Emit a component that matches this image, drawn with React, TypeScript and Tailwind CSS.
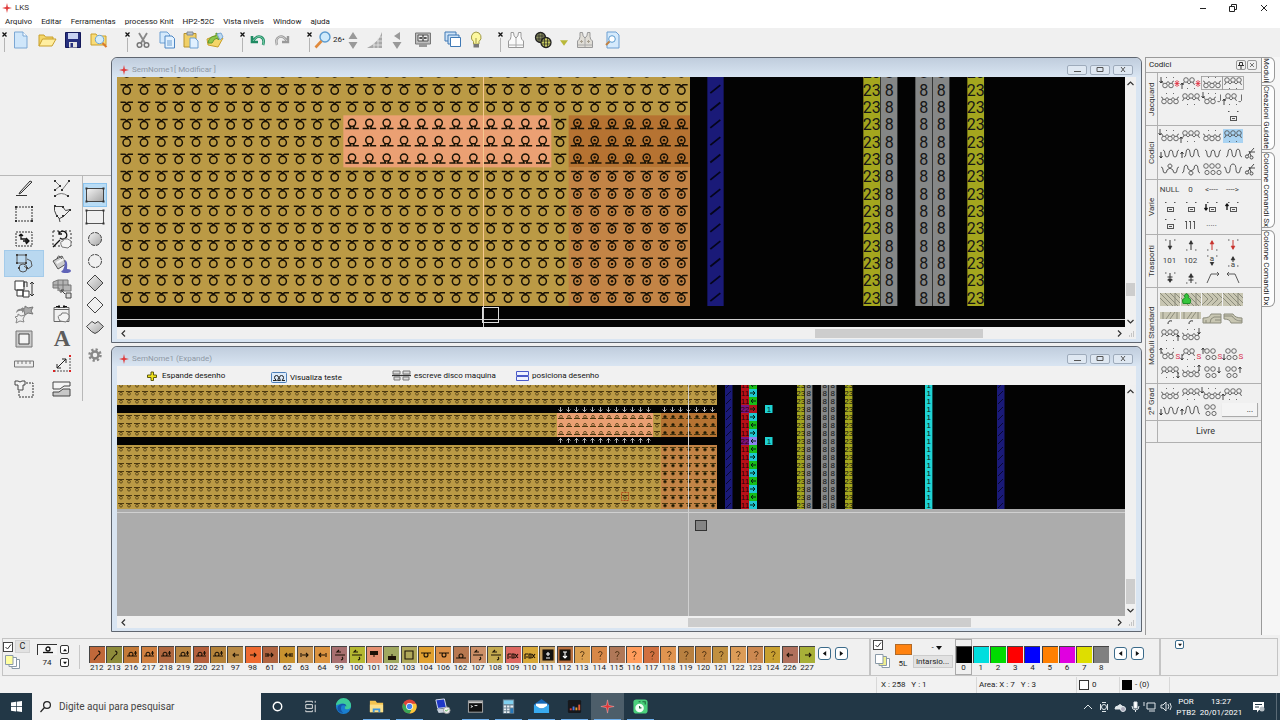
import React from 'react';

const INK = '#4a4a4a';

/* ---------- shared bits ---------- */

const Star: React.FC<{ size?: number }> = ({ size = 10 }) => (
  <svg width={size} height={size} viewBox="0 0 10 10" className="shrink-0">
    <path d="M5 0 5.9 4.1 10 5 5.9 5.9 5 10 4.1 5.900 0 5 4.100 4.100z" fill="#e03a3a" />
  </svg>
);

const Tri: React.FC<{ dir: 'up' | 'down' | 'left' | 'right'; size?: number; fill?: string }> = ({ dir, size = 6, fill = '#111' }) => {
  const d = { up: 'M0 5 3 1 6 5z', down: 'M0 1 3 5 6 1z', left: 'M5 0 1 3 5 6z', right: 'M1 0 5 3 1 6z' }[dir];
  return (
    <svg width={size} height={size} viewBox="0 0 6 6" className="shrink-0">
      <path d={d} fill={fill} />
    </svg>
  );
};

const Chevron: React.FC<{ d: string }> = ({ d }) => (
  <svg width="7" height="7" viewBox="0 0 7 7">
    <path d={d} fill="none" stroke="#333" strokeWidth="1.2" />
  </svg>
);

const Check: React.FC<{ label: string }> = ({ label }) => (
  <label className="relative flex size-[10px] shrink-0">
    <input type="checkbox" defaultChecked aria-label={label} className="peer size-[10px] appearance-none border border-[#444] bg-white" />
    <svg width="10" height="10" viewBox="0 0 10 10" className="pointer-events-none absolute inset-0 hidden peer-checked:block">
      <path d="M2.500 5l2 2 3.500-4.500" fill="none" stroke="#333" />
    </svg>
  </label>
);

/* ---------- top toolbar ---------- */

const Grip = () => (
  <div className="flex w-[7px] shrink-0 flex-col items-center pt-1">
    <svg width="5" height="5" viewBox="0 0 5 5">
      <path d="M.5.5l4 4M4.5.5l-4 4" stroke="#111" strokeWidth="1.3" />
    </svg>
    <div className="mt-px h-3.5 w-px bg-[#b4b4b4]" />
  </div>
);

const Tool: React.FC<{ label: string; w?: string; children: React.ReactNode }> = ({ label, w = 'w-6', children }) => (
  <button aria-label={label} className={`${w} flex h-6 shrink-0 items-center justify-center`}>
    <svg width="18" height="18" viewBox="0 0 18 18" fill="none" strokeWidth="1" className="shrink-0 overflow-visible">
      {children}
    </svg>
  </button>
);

const Vest: React.FC<{ dots?: boolean }> = ({ dots }) => (
  <>
    <path d="M4 1.500h2.500q0 4 2.500 5.500 2.500-1.500 2.500-5.500H14v4q0 3 2.500 4.500v6.500h-15V10Q4 8.500 4 5.500z" fill={dots ? '#e0ddd6' : '#fbfbfb'} stroke="#999" />
    <path d="M9 7v9M2 14h14" stroke="#aaa" />
    {dots && <path d="M5.500 9v3M4 10.500h3M12.500 9v3M11 10.500h3" stroke="#a8a090" />}
  </>
);

const Toolbar = () => (
  <div className="flex h-7 shrink-0 items-start gap-3 overflow-hidden bg-[#f0f0f0] pl-px">
    <div className="flex">
      <Grip />
      <Tool label="Novo" w="w-[26px]">
        <path d="M2.500 1h8.500l4 4v12H2.500z" fill="#cfe6fa" stroke="#7ba7d4" />
        <path d="M11 1v4h4" fill="#fff" stroke="#7ba7d4" />
      </Tool>
      <Tool label="Abrir" w="w-[26px]">
        <path d="M1 15V4h5l1.500 2H15v3" fill="#f5d76a" stroke="#c9a02c" />
        <path d="M1 15l3.500-7H18l-4 7z" fill="#ffeea0" stroke="#c9a02c" />
      </Tool>
      <Tool label="Salvar" w="w-[26px]">
        <path d="M1.500 1.500h15v15h-15z" fill="#27307e" stroke="#14195a" />
        <path d="M4 2h10v6H4z" fill="#c9d3f2" />
        <path d="M5 11h8v5.500H5z" fill="#e4e4e4" />
        <path d="M6.500 12h2.500v4H6.500z" fill="#27307e" />
      </Tool>
      <Tool label="Procurar" w="w-[26px]">
        <path d="M1 14V3h5l1.500 2H16v9z" fill="#f9dc78" stroke="#c9a02c" />
        <circle cx="9.500" cy="8.500" r="4.200" fill="#d3ecfb" stroke="#6fa6d6" />
        <path d="M12.500 12l4 4" stroke="#d97b2d" strokeWidth="2.200" />
      </Tool>
    </div>
    <div className="flex">
      <Grip />
      <Tool label="Recortar">
        <path d="M5 2l6 10M13 2L7 12" stroke="#888" strokeWidth="1.800" />
        <circle cx="5.500" cy="14" r="2.300" stroke="#777" strokeWidth="1.500" />
        <circle cx="12.500" cy="14" r="2.300" stroke="#777" strokeWidth="1.500" />
      </Tool>
      <Tool label="Copiar">
        <path d="M2 1h7l2.500 2.500V12H2z" fill="#d5eafc" stroke="#6d9fd2" />
        <path d="M7 5h7l2.500 2.500V17H7z" fill="#e3f2ff" stroke="#4d86c4" />
        <path d="M9 10h5M9 12h5M9 14h5" stroke="#6d9fd2" />
      </Tool>
      <Tool label="Colar">
        <path d="M2 2.500h12V16H2z" fill="#f0cf66" stroke="#b8922c" />
        <path d="M5 1h6v3H5z" fill="#b9c3ce" stroke="#808a94" />
        <path d="M8 7h5l3 3v7H8z" fill="#e0f0ff" stroke="#6d9fd2" />
      </Tool>
      <Tool label="Enviar">
        <path d="M1 8l10-4 6 3-5 9-10-2z" fill="#f4d568" stroke="#c9a02c" />
        <path d="M2 12q1-7 8-7V2l6 3-4 4V7q-4 0-6 5z" fill="#8fc64a" stroke="#5e9a2c" />
        <path d="M11 3l4-1 2 4-3 3z" fill="#bcd9f0" stroke="#7ba7d4" />
      </Tool>
    </div>
    <div className="flex">
      <Grip />
      <Tool label="Desfazer">
        <path d="M3 5v6h6M4 10q4-6 8-4t2 8" stroke="#1f8a62" strokeWidth="2.600" />
        <path d="M4 10q4-6 8-4t2 8" stroke="#8fe0bb" strokeWidth=".8" />
      </Tool>
      <Tool label="Refazer">
        <path d="M15 5v6H9M14 10Q10 4 6 6t-2 8" stroke="#999" strokeWidth="2.400" />
        <path d="M14 10Q10 4 6 6t-2 8" stroke="#ddd" strokeWidth=".8" />
      </Tool>
    </div>
    <div className="flex">
      <Grip />
      <Tool label="Zoom" w="w-5">
        <circle cx="11" cy="6" r="5" fill="#cfeafb" stroke="#5b9bd0" strokeWidth="1.400" />
        <path d="M7.500 10L1.500 16.500" stroke="#e08a3c" strokeWidth="2.600" />
      </Tool>
      <span className="flex h-6 w-3.5 items-center text-[8px] text-[#222]">26•</span>
      <Tool label="Mais ou menos" w="w-3">
        <path d="M4.500 8L9 1l4.500 7zM4.500 11L9 18l4.500-7z" fill="#999" />
      </Tool>
      <Tool label="Inclinar" w="w-8">
        <path d="M1 17Q13 11 16 1v16z" fill="#a8a8a8" />
        <path d="M7 14h9M11 10h5M13 6h3M12 7v10M8 12v5" stroke="#e8e8e8" strokeWidth=".8" />
      </Tool>
      <Tool label="Girar" w="w-3">
        <path d="M12 1v8L6 5zM4.500 11L9 18l4.500-7z" fill="#999" />
      </Tool>
      <Tool label="Monitor" w="w-10">
        <path d="M1.500 2h15v11h-15z" fill="#bdbdbd" stroke="#777" />
        <path d="M4 4h10v6H4z" fill="#eee" stroke="#555" />
        <path d="M5 7h3M10 7h3M7 6v2M11 6v2M9 4v6" stroke="#222" />
        <path d="M5 13h8v3H5z" fill="#999" />
      </Tool>
      <Tool label="Janelas" w="w-5">
        <path d="M1 1h11v9H1z" fill="#cde2f6" stroke="#3f79b5" />
        <path d="M4 4h11v9H4z" fill="#cde2f6" stroke="#3f79b5" />
        <path d="M6.500 6.500h10v9h-10z" fill="#fff" stroke="#3f79b5" />
      </Tool>
      <Tool label="Dica" w="w-[26px]">
        <path d="M9 1a5.300 5.300 0 0 1 3 9.500V13H6.500v-2.500A5.300 5.300 0 0 1 9 1z" fill="#fdf8a0" stroke="#a09a48" />
        <path d="M6.500 13h5.500v3.500H6.500z" fill="#777" />
        <path d="M9 7v5" stroke="#a09a48" />
      </Tool>
    </div>
    <div className="-ml-1 flex">
      <Grip />
      <Tool label="Modelo"><Vest /></Tool>
      <Tool label="Malha" w="w-[30px]">
        <circle cx="6.500" cy="6.500" r="5" fill="#8d9160" stroke="#222" strokeWidth="1.300" />
        <circle cx="12" cy="11.500" r="5" fill="#c5c860" stroke="#222" strokeWidth="1.300" />
        <path d="M2 5h9M2 8h9M5 2v9M8 2v9M8 10h9M8 13h9M10.500 7v9M13.500 7v9" stroke="#222" strokeWidth=".7" />
      </Tool>
      <button aria-label="Opções" className="flex h-6 w-3 items-center justify-center pt-1.5"><Tri dir="down" size={8} fill="#b9b83a" /></button>
      <Tool label="Modelo medido" w="w-[30px]"><Vest dots /></Tool>
      <Tool label="Visualizar">
        <path d="M4 1h9l3 3v13H4z" fill="#d5eafc" stroke="#6d9fd2" />
        <circle cx="9" cy="8" r="3.300" fill="#fff" stroke="#5b9bd0" />
        <path d="M6.500 10.500L3 14" stroke="#c08040" strokeWidth="2" />
      </Tool>
    </div>
  </div>
);

/* ---------- left toolbox ---------- */

const tools: { name: string; art: React.ReactNode }[] = [
  { name: 'Lápis', art: <><path d="M16 2L6 13l-1 2 2-1L18 3z" fill="#ddd" stroke="#333" /><path d="M2 16.500h11" stroke="#333" /></> },
  { name: 'Linhas', art: <><path d="M3 2l5 5-5 4M17 2l-7 9M3 17q6-5 13 0" stroke="#777" /><path d="M2 1h2v2H2zM7 6h2v2H7zM2 10h2v2H2zM16 1h2v2h-2zM9 10h2v2H9zM2 16h2v2H2zM15 16h2v2h-2z" fill="#333" /></> },
  { name: 'Seleção', art: <><path d="M2 3h16v14H2z" stroke="#333" strokeDasharray="2 1" /><path d="M1 2h2v2H1zM17 2h2v2h-2zM1 16h2v2H1zM17 16h2v2h-2z" fill="#333" /></> },
  { name: 'Laço', art: <><path d="M2.500 2.500h8l3 4 5-1-7 7-4 2-3-3-2-5z" stroke="#444" /><path d="M7 14l1 4" stroke="#444" /><path d="M2 1h2v2H2zM10 2h2v2h-2zM17 5h2v2h-2zM4 11h2v2H4zM10 11h2v2h-2z" fill="#333" /></> },
  { name: 'Mover', art: <><path d="M2 3h16v14H2z" stroke="#333" strokeDasharray="2 1" /><path d="M7 5v5h5v4M7 5L5 7M7 5l2 2M9 12h6M12 9l3 3-3 3" stroke="#111" strokeWidth="1.300" /></> },
  { name: 'Girar seleção', art: <><path d="M1 2h18v15H1z" stroke="#333" strokeDasharray="2 2" /><path d="M7 5a4 4 0 1 1 1 4M7 2v3h3M1 18l7-7" stroke="#111" strokeWidth="1.300" /><path d="M10 18q-3-6 1-6l1-2q4-1 7 2v4l-3 3z" fill="#f4f4f4" stroke="#777" /></> },
  { name: 'Formas', art: <><path d="M3 1h9v8H3zM13 5l4 2 1 5-4 3-4-3" stroke="#555" /><circle cx="9" cy="14" r="4" stroke="#555" /><path d="M2 0h2v2H2zM11 0h2v2h-2zM2 8h2v2H2zM11 8h2v2h-2zM4 13h2v2H4zM12 13h2v2h-2z" fill="#444" /></> },
  { name: 'Balde', art: <><path d="M1 7l9-5 4 8-8 5z" fill="#ccc" stroke="#555" /><path d="M4 8l7-4 1 2-7 4z" fill="#f6f6f6" /><path d="M5 5q1-6 5 0" stroke="#555" /><path d="M13 6q3 1 2 9 4 0 4 2-1 2.500-7 2-5-1-1-3 2-4 2-10z" fill="#6064b8" /></> },
  { name: 'Copiar texto', art: <><path d="M1 2h9v9H1zM3 11h6v6H3zM9 12h6v6H9z" fill="#fff" stroke="#333" /><path d="M10 8V3h3v5M18 3v14M16 5l2-2 2 2M16 15l2 2 2-2" stroke="#333" /></> },
  { name: 'Blocos', art: <><path d="M1 3l5-2h10v5h3v6H7V9H1z" fill="#b4b4b4" stroke="#777" /><path d="M6 1v11M11 1v11M1 6h16" stroke="#777" /><path d="M14 14h5v5h-5zM9 11l4 4M9 11h3M9 11v3" fill="#ddd" stroke="#444" /></> },
  { name: 'Estrelas', art: <><path d="M11 2l3 2 5-1-2 4 2 3-5-1-3 2-1-4-3-2 4-1z" fill="#aaa" stroke="#777" /><path d="M2 9q1-5 6-4V3l3 3-3 3V7q-3-1-6 2z" fill="#888" /><path d="M4 10l3 2 4-1-2 4 1 3-4-1-4 2 1-4-2-2 3-1z" fill="#eee" stroke="#888" /></> },
  { name: 'Arrastar', art: <><path d="M2 3.500h15v14H2zM2 5.500h15" stroke="#666" /><path d="M4 2.500h4M11 2.500h4M7 1v3M12 1v3" stroke="#111" /><path d="M8 17q-4-6 1-6l1-2q5-1 7 2v3l-3 4z" fill="#f4f4f4" stroke="#777" /></> },
  { name: 'Moldura', art: <><path d="M2 2h16v16H2z" fill="#ccc" stroke="#777" /><path d="M5 5h10v10H5z" fill="#f4f4f4" stroke="#444" /></> },
  { name: 'Texto', art: <text x="10" y="17" fontSize="23" fontWeight="bold" textAnchor="middle" fontFamily="Liberation Serif, serif" fill="#5c5c5c">A</text> },
  { name: 'Régua', art: <><path d="M.5 7h19v6H.5z" fill="#eee" stroke="#777" /><path d="M4 7v3M8 7v3M12 7v3M16 7v3" stroke="#777" /></> },
  { name: 'Medir', art: <><path d="M2 17h16V2" stroke="#555" strokeDasharray="2 1" /><path d="M5 14l9-9M5 14v-4M5 14h4M14 5v4M14 5h-4" stroke="#222" /><path d="M1 16h2v2H1zM17 1h2v2h-2zM17 16h2v2h-2z" fill="#d22" /></> },
  { name: 'Camisa', art: <><path d="M6 4h13v14H5V9" stroke="#333" strokeDasharray="2 1" /><path d="M1 2h3q2 2 4 0h3v4H9v5H4V6H1z" fill="#f4f4f4" stroke="#444" /></> },
  { name: 'Camadas', art: <><path d="M1 3h17v4h-6l-4 3H1z" fill="#f4f4f4" stroke="#444" /><path d="M1 13h6l4-3h7v7H1z" fill="#c8c8c8" stroke="#444" /></> },
];

const corners = 'M.5 2.500h2v2h-2zM17.500 2.500h2v2h-2zM.5 15.500h2v2h-2zM17.500 15.500h2v2h-2z';

const shapes: { name: string; art: React.ReactNode }[] = [
  { name: 'Retângulo cheio', art: <><path d="M1.500 3.500h17v13h-17z" fill="url(#silver)" stroke="#444" /><path d={corners} fill="#333" /></> },
  { name: 'Retângulo', art: <><path d="M1.500 3.500h17v13h-17z" stroke="#555" /><path d={corners} fill="#333" /></> },
  { name: 'Círculo cheio', art: <circle cx="10" cy="10" r="6.500" fill="url(#silver)" stroke="#444" strokeDasharray="4 1" /> },
  { name: 'Círculo', art: <circle cx="10" cy="10" r="6.500" stroke="#444" strokeDasharray="4 1" /> },
  { name: 'Losango cheio', art: <path d="M10 2l8 8-8 8-8-8z" fill="url(#silver)" stroke="#444" /> },
  { name: 'Losango', art: <path d="M10 2l8 8-8 8-8-8z" stroke="#444" /> },
  { name: 'Polígono', art: <path d="M1.500 9.500l5.500-5 3 2 3-2 5.500 5-5 5-3.500 2-3.500-2z" fill="url(#silver)" stroke="#444" /> },
];

const Toolbox = () => (
  <aside className="w-[111px] shrink-0 bg-[#f0f0f0] pt-[119px]">
    <div className="flex border-t border-[#b8b8b8] pl-[5px]">
      <div className="grid grid-cols-2 content-start border-r border-[#b8b8b8] pr-px">
        {tools.map((t) => (
          <button
            key={t.name}
            aria-label={t.name}
            className={`flex h-[25px] w-[38px] items-center justify-center ${t.name === 'Formas' ? 'bg-[#b9d8f0] outline outline-[#a4cbea]' : ''}`}
          >
            <svg width="20" height="20" viewBox="0 0 20 20" fill="none">{t.art}</svg>
          </button>
        ))}
      </div>
      <div className="flex flex-col items-center pt-2 pl-px">
        {shapes.map((s, i) => (
          <button key={s.name} aria-label={s.name} className={`flex size-[22px] items-center justify-center ${i === 0 ? 'bg-[#b9dcf5] outline outline-[#8cc4ee]' : ''}`}>
            <svg width="20" height="20" viewBox="0 0 20 20" fill="none">
              <defs>
                <linearGradient id="silver" x1="0" y1="0" x2="1" y2="1">
                  <stop offset="0" stopColor="#f4f4f4" />
                  <stop offset="1" stopColor="#a4a4a4" />
                </linearGradient>
              </defs>
              {s.art}
            </svg>
          </button>
        ))}
        <button aria-label="Configurar" className="mt-1.5 flex size-[22px] items-center justify-center">
          <svg width="14" height="14" viewBox="0 0 14 14" fill="none">
            <circle cx="7" cy="7" r="5.500" stroke="#888" strokeWidth="2.500" strokeDasharray="2.200 2.100" />
            <circle cx="7" cy="7" r="3.500" stroke="#888" strokeWidth="2.500" />
          </svg>
        </button>
      </div>
    </div>
  </aside>
);

/* ---------- MDI windows ---------- */

const HScroll: React.FC<{ before: string; thumb: string; after: string }> = ({ before, thumb, after }) => (
  <div className="flex h-3 shrink-0 items-center bg-[#f0f0f0]">
    <button aria-label="Esquerda" className="flex w-3 justify-center"><Chevron d="M5 .5 2 3.500 5 6.500" /></button>
    <div className={before} />
    <div className={`${thumb} h-[9px] bg-[#cdcdcd]`} />
    <div className={after} />
    <button aria-label="Direita" className="flex w-3 justify-center"><Chevron d="M2 .5 5 3.500 2 6.500" /></button>
    <svg width="11" height="12" viewBox="0 0 11 12">
      <path d="M8 5h1M6 7h1M8 7h1M4 9h1M6 9h1M8 9h1" stroke="#999" />
    </svg>
  </div>
);

const VScroll: React.FC<{ before: string; thumb: string; after: string }> = ({ before, thumb, after }) => (
  <div className="flex w-[11px] shrink-0 flex-col items-center bg-[#f0f0f0]">
    <button aria-label="Acima" className="flex h-3 items-center"><Chevron d="M.5 5 3.500 2 6.500 5" /></button>
    <div className={before} />
    <div className={`${thumb} w-[9px] bg-[#cdcdcd]`} />
    <div className={after} />
    <button aria-label="Abaixo" className="flex h-3 items-center"><Chevron d="M.5 2 3.500 5 6.500 2" /></button>
  </div>
);

const MdiWindow: React.FC<{ title: string; children: React.ReactNode }> = ({ title, children }) => (
  <section className="flex min-h-0 flex-1 flex-col rounded-t-md border border-[#5f6670] bg-[#d9e5f2] px-[5px] pb-[3px]">
    <header className="-mx-[5px] flex h-[19px] shrink-0 items-center rounded-t-md bg-linear-to-b from-[#c0cddd] to-[#d9e5f2] px-[5px] pt-1">
      <div className="pl-[2px]"><Star /></div>
      <h2 className="flex-1 pl-[3px] text-[8px] leading-3 text-[#8f99a5]">{title}</h2>
      <div className="flex gap-[3px] pr-[3px]">
        {[<path d="M5 6.500h7" />, <path d="M5 2.500h6v4H5z" />, <path d="M6 2l4 5M10 2L6 7" />].map((p, i) => (
          <button key={i} aria-label={['Minimizar', 'Restaurar', 'Fechar'][i]} className="flex h-2.5 w-5 items-center justify-center rounded-xs border border-[#9eabbb] bg-[#dfe8f2]">
            <svg width="16" height="9" viewBox="0 0 16 9" fill="none" stroke="#555">{p}</svg>
          </button>
        ))}
      </div>
    </header>
    {children}
  </section>
);

const CELL = 52 / 3;

const symbolDefs = (
  <defs>
    <g id="front" fill="none" stroke="#1a1205" strokeWidth="1.500">
      <path d="M2.500 4.200H7L9.300 6.200M15 4.200H10.400L8.100 6.200" />
      <circle cx="8.700" cy="9.900" r="3.700" />
    </g>
    <g id="back" fill="none" stroke="#1a1205" strokeWidth="1.500">
      <path d="M2 13.100H7.500L6.500 10.500M15.500 13.100H9.900L10.900 10.500" />
      <circle cx="8.700" cy="7.500" r="3.600" />
    </g>
  </defs>
);

const sideColumns = [
  { col: 43, text: '23', bg: '#a4a61e' },
  { col: 44, text: '8', bg: '#858787' },
  { col: 46, text: '8', bg: '#858787' },
  { col: 47, text: '8', bg: '#858787' },
  { col: 49, text: '23', bg: '#a4a61e' },
];

const EditCanvas = () => {
  const rows = Array.from({ length: 14 }, (_, r) => r);
  const cols = Array.from({ length: 33 }, (_, c) => c);
  const x = (c: number) => 1 + c * CELL;
  const y = (r: number) => 229 + (r - 14) * CELL;
  return (
    <svg width="2000" height="251" className="block" fontFamily="Roboto, sans-serif">
      {symbolDefs}
      <rect width="573" height="229" fill="#bb9a45" />
      <rect x={x(13)} y={y(3)} width={12 * CELL} height={3 * CELL} fill="#eba073" />
      <rect x={x(26)} y={y(3)} width={7 * CELL} height={3 * CELL} fill="#b67332" />
      <rect x={x(26)} y={y(6)} width={7 * CELL} height={8 * CELL} fill="#c38446" />
      {rows.map((r) => cols.map((c) => {
        const mid = r > 2 && r < 6;
        const back = mid && c > 12 && c !== 25;
        return (
          <g key={`${r}-${c}`} transform={`translate(${x(c)} ${y(r)})`}>
            <use href={back ? '#back' : '#front'} />
            {c > 25 && r > 2 && <circle cx="8.700" cy={back ? 7.5 : 9.9} r="1.200" fill="#1a1205" />}
          </g>
        );
      }))}
      <rect x={x(34)} width={CELL - 1} height="229" fill="#1a1a78" />
      {rows.map((r) => <path key={r} d={`M${x(34) + 3} ${y(r) + 12.5}l10-8`} stroke="#05051a" strokeWidth="1.800" />)}
      {sideColumns.map((s) => (
        <g key={s.col}>
          <rect x={x(s.col)} width={CELL - 0.6} height="229" fill={s.bg} />
          {rows.map((r) => (
            <text key={r} x={x(s.col) + 8.5} y={y(r) + 15} fontSize="16" textAnchor="middle" fill="#161616">{s.text}</text>
          ))}
        </g>
      ))}
      <path d="M366.500 0v251" stroke="#f6c890" />
      <path d="M366.500 229v22M0 242.500h2000" stroke="#cfcfcf" />
      <rect x="365.500" y="230.500" width="16" height="15" fill="none" stroke="#ddd" />
    </svg>
  );
};

const ExpandCanvas = () => {
  const rows = Array.from({ length: 16 }, (_, r) => r);
  const cols = Array.from({ length: 75 }, (_, c) => c);
  const y = (r: number) => r * 8 - 4;
  const numCols = [
    { col: 85, text: '23', bg: '#a4a61e' },
    { col: 86, text: '8', bg: '#858787' },
    { col: 88, text: '8', bg: '#858787' },
    { col: 89, text: '8', bg: '#858787' },
    { col: 91, text: '23', bg: '#a4a61e' },
    { col: 101, text: '1', bg: '#1fd3d3' },
  ];
  return (
    <svg width="2000" height="231" className="block" fontFamily="Liberation Sans, sans-serif" fontSize="8" textAnchor="middle">
      <rect width="2000" height="231" fill="#acacac" />
      <rect width="2000" height="124" fill="#030303" />
      <path d="M0 0h600v20H0zM0 28h600v24H0zM0 60h600v64H0z" fill="#bb9a45" />
      <path d="M440 28h96v24h-96z" fill="#eba073" />
      <path d="M544 28h56v24h-56z" fill="#b67332" />
      <path d="M544 60h56v64h-56z" fill="#c38446" />
      {rows.map((r) => cols.map((c) => {
        const right = c > 67;
        const px = c * 8;
        if (r === 3 || r === 7) {
          if (!((c > 54 && c < 67) || (right && r === 3))) return null;
          return (
            <path key={`${r}-${c}`} d={r === 3 ? `M${px + 3.5} ${y(r) + 2}v5M${px + 1.5} ${y(r) + 4.500}l2 2 2-2` : `M${px + 3.5} ${y(r) + 1}v5M${px + 1.5} ${y(r) + 3.500}l2-2 2 2`} stroke="#b5b5b5" fill="none" />
          );
        }
        const back = r > 3 && r < 7 && c > 54 && c !== 67;
        const dot = right && r > 3 ? '#1a1205' : 'none';
        return (
          <g key={`${r}-${c}`} stroke="#4a3810" strokeWidth=".8" fill={dot}>
            <path d={back ? `M${px + 1} ${y(r) + 5.5}h6` : `M${px + 1} ${y(r) + 2.5}h6`} strokeWidth="1" />
            <circle cx={px + 4} cy={y(r) + (back ? 3.8 : 4.7)} r="1.400" />
          </g>
        );
      }))}
      {[76, 110].map((c) => (
        <g key={c}>
          <rect x={c * 8} width="7.500" height="124" fill="#1a1a78" />
          {rows.map((r) => <path key={r} d={`M${c * 8 + 1} ${y(r) + 7}l5-5`} stroke="#080830" />)}
        </g>
      ))}
      {rows.map((r) => {
        const special = r === 3 || r === 7;
        // the carriage direction is shifted by one pass between the two transfers
        const toRight = r > 3 && r < 7 ? r % 2 === 0 : r % 2 === 1 && r !== 7;
        const bg = r === 3 ? '#b0121c' : r === 7 ? '#8d85f0' : toRight ? '#1fc8d3' : '#18bd18';
        return (
          <g key={r}>
            <rect x="624" y={y(r)} width="8" height="8" fill={special ? '#7c1480' : '#b81018'} />
            <text x="628" y={y(r) + 7} fill="#2a0206">{special ? '22' : '11'}</text>
            <rect x="632" y={y(r)} width="8" height="8" fill={bg} />
            <path d={toRight ? `M633 ${y(r) + 4}h5M636 ${y(r) + 2}l2 2-2 2` : `M634 ${y(r) + 4}h5M636 ${y(r) + 2}l-2 2 2 2`} stroke="#062012" fill="none" />
            {special && <rect x="648" y={y(r)} width="7.500" height="8" fill="#1fd3d3" />}
            {special && <text x="652" y={y(r) + 7} fill="#033">1</text>}
          </g>
        );
      })}
      {numCols.map((n) => (
        <g key={n.col}>
          <rect x={n.col * 8} width="7.400" height="124" fill={n.bg} />
          {rows.map((r) => <text key={r} x={n.col * 8 + 3.8} y={y(r) + 7} fill="#111">{n.text}</text>)}
        </g>
      ))}
      <path d="M571.500 0v231M0 127.500h2000" stroke="#d0d0d0" />
      <rect x="504.500" y="107.500" width="7" height="8" fill="none" stroke="#b0441a" strokeDasharray="2 1" />
      <rect x="578.500" y="135.500" width="11" height="10" fill="#858585" stroke="#333" />
    </svg>
  );
};

const ExpandBar = () => (
  <div className="grid h-[19px] shrink-0 grid-cols-[119px_122px_125px_auto] bg-[#f1f1f1] pl-[30px] text-[8px] text-[#111]">
    <button className="flex items-center gap-[5px]">
      <svg width="10" height="10" viewBox="0 0 10 10"><path d="M4 1h2.500v3H9.500v2.500h-3v3H4v-3H.5V4H4z" fill="#eee31c" stroke="#5f5a10" /></svg>
      Espande desenho
    </button>
    <button className="flex items-center gap-[3px] pt-1 pl-[5px]">
      <svg width="16" height="11" viewBox="0 0 16 11" fill="none"><rect x=".5" y=".5" width="15" height="10" rx="1" fill="#dcebfa" stroke="#4d7fb8" /><path d="M2 8.500h3.500q-2-1.500-2-3a2 2 0 0 1 4 0q0 1.500-1 3h3q-1-1.500-1-3a2 2 0 0 1 4 0q0 1.500-1.500 3H14" stroke="#222" /></svg>
      Visualiza teste
    </button>
    <button className="flex items-center gap-[3px] pl-1">
      <svg width="19" height="11" viewBox="0 0 19 11" fill="none"><path d="M1 1h7v3H1zM11 1h7v3h-7zM2 7h6v3H2zM11 7h6v3h-6z" fill="#ddd" stroke="#777" /><path d="M0 5.500h19" stroke="#333" strokeWidth="1.400" /></svg>
      escreve disco maquina
    </button>
    <button className="flex items-center gap-[3px] pl-[3px]">
      <svg width="13" height="10" viewBox="0 0 13 10"><path d="M.5.500h12v4H.500zM.500 5.500h12v4H.500z" fill="#eef2ff" stroke="#4a5ac8" /></svg>
      posiciona desenho
    </button>
  </div>
);

/* ---------- right palette ---------- */

type Arrow = [number, number, 'u' | 'd'];

const arrowPath = ([x, y, dir]: Arrow) =>
  dir === 'u' ? `M${x} ${y + 6}V${y}M${x - 1.5} ${y + 2}L${x} ${y}L${x + 1.5} ${y + 2}` : `M${x} ${y}V${y + 6}M${x - 1.5} ${y + 4}L${x} ${y + 6}L${x + 1.5} ${y + 4}`;

interface LoopsProps { n?: number; up?: boolean; arrow?: Arrow; mark?: string; box?: boolean; sel?: boolean; twin?: boolean }

const Loops: React.FC<LoopsProps> = ({ n = 3, up, arrow, mark, box, sel, twin }) => {
  const cy = up ? 4 : 9.5;
  const start = n === 3 ? 4 : 5;
  const xs = Array.from({ length: n }, (_, i) => start + i * 6);
  const last = start + (n - 1) * 6;
  return (
    <svg width="20" height="14" viewBox="0 0 20 14" fill="none" stroke={INK} strokeWidth=".8" className={`overflow-visible ${sel ? 'bg-[#a9d3f2]' : ''}`}>
      {box && <rect x="-.5" y=".5" width="21" height="13" stroke="#999" />}
      {xs.map((x) => <circle key={x} cx={x} cy={cy} r="2.300" />)}
      {twin && xs.map((x) => <circle key={`t${x}`} cx={x + 1} cy="10.500" r="2.100" />)}
      {!twin && xs.slice(1).map((x) => (
        <path key={`p${x}`} d={up ? `M${x - 5} 5.800q2 4 4 0` : `M${x - 5} 7.700q2-4 4 0`} />
      ))}
      {!twin && <path d={up ? `M1 8.500q2 0 2-2.500M${last + 1} 6q0 2.500 2 2.500` : `M1 5q2 0 2 2.500M${last + 1} 7.500q0-2.500 2-2.500`} />}
      {!twin && <path d={up ? 'M6 12.500h1M13 12.500h1' : 'M6 1.500h1M13 1.500h1'} />}
      {arrow && <path d={arrowPath(arrow)} stroke="#222" />}
      {mark === 'x' && <path d="M15 5l4 5M19 5l-4 5M17 4v7M14.500 7.500h5" stroke="#e03040" />}
      {mark === 'S' && <text x="15.500" y="12" fontSize="8" fill="#d83050" stroke="none">S</text>}
      {mark === 'J' && <path d="M18.500 2.500v6q-1 2-3 1" />}
    </svg>
  );
};

const Wave: React.FC<{ d: string; arrow?: Arrow }> = ({ d, arrow }) => (
  <svg width="20" height="14" viewBox="0 0 20 14" fill="none" stroke={INK} strokeWidth=".9" className="overflow-visible">
    <path d={d} />
    {arrow && <path d={arrowPath(arrow)} stroke="#222" />}
  </svg>
);

const W_UP = 'M3 4q2 0 2 4 0 3 2 3t2-3q0-4 2-4t2 4q0 3 2 3t2-3q0-4 2-4';
const W_DOWN = 'M3 11q2 0 2-4 0-4 2-4t2 4q0 4 2 4t2-4q0-4 2-4t2 4q0 4 2 4';

const Mark: React.FC<{ color?: string; dir?: 'u' | 'd'; twoWay?: boolean; letter?: string }> = ({ color = '#333', dir = 'd', twoWay, letter }) => (
  <svg width="20" height="14" viewBox="0 0 20 14" fill="none" stroke={color}>
    <path d={dir === 'd' ? 'M10 2v9' : 'M10 3v9'} />
    <path d={dir === 'd' ? 'M8 8h4l-2 3.500z' : 'M8 6h4l-2-3.500z'} fill={color} strokeWidth=".5" />
    <path d={dir === 'd' ? 'M5 2h1.500M14 2h1.500' : 'M5 12h1.500M14 12h1.500'} stroke="#555" />
    {twoWay && <path d="M7.500 6h5M7.500 9h5" />}
    {letter && <text x="10" y={dir === 'd' ? 7 : 13} fontSize="8" textAnchor="middle" stroke="#f0f0f0" strokeWidth="2" paintOrder="stroke" fill="#444">{letter}</text>}
  </svg>
);

const Cell: React.FC<{ arrow?: 'u' | 'd' }> = ({ arrow }) => (
  <svg width="20" height="14" viewBox="0 0 20 14" fill="none" stroke="#555">
    <rect x="7.500" y="7.500" width="6" height="4" />
    <path d="M9 9.500h3M5 2.500h1.500M14 2.500h1.500" />
    {arrow && <path d={arrowPath([4, 4, arrow])} stroke="#111" strokeWidth="1.300" />}
  </svg>
);

const Weave: React.FC<{ v: number; green?: boolean }> = ({ v, green }) => (
  <svg width="20" height="13" viewBox="0 0 20 13" fill="none" stroke="#8c8c7c">
    {v < 4 ? (
      <>
        <rect width="20" height="13" fill="#c8c6b2" stroke="none" />
        {v === 2
          ? <path d="M0 0l6 6-6 6M5 0l6 6-6 6M10 0l6 6-6 6M15 0l5 5M15 13l5-5" />
          : <path d="M0 0l13 13M5 0l13 13M0 5l8 8M10 0l10 10M15 0l5 5M15 0v13" />}
      </>
    ) : v === 4 ? (
      <>
        <rect y="1" width="20" height="7" fill="#c8c6b2" stroke="none" />
        <path d="M3 1v7M6 8l5-7M10 8l5-7M17 1v7" />
        <path d="M8 13q0-4 4-3" stroke="#333" />
      </>
    ) : v === 5 ? (
      <path d="M1 12V7q7 0 8-4h10v9zM4 12V9M8 12q0-5 4-6h7M19 9h-6" fill="#c8c6b2" />
    ) : (
      <path d="M1 3h9q2 4 9 4v5H8q-1-4-7-4zM1 5h8q3 5 10 5" fill="#c8c6b2" />
    )}
    {green && <path d="M4 1.500q1.500-1.500 3 0 1 2 0 3 4 1 2 6H2q-2-4 2-6-1-1.500 0-3z" fill="#35c63c" stroke="#1f8f28" />}
  </svg>
);

const Scissors = () => (
  <svg width="14" height="14" viewBox="0 0 14 14" fill="none" stroke={INK}>
    <circle cx="3" cy="10.500" r="1.600" />
    <circle cx="7.500" cy="11.500" r="1.500" />
    <path d="M4 9l6-7M7 10l-2-5M5 6h6" />
  </svg>
);

const Txt: React.FC<{ children: React.ReactNode }> = ({ children }) => <span className="text-[8px] leading-3 whitespace-nowrap text-[#444]">{children}</span>;

const gap = null;

const sections: { label: string; height: string; rows: React.ReactNode[][] }[] = [
  {
    label: 'Jacquard', height: 'h-[53px]',
    rows: [
      [<Loops n={2} arrow={[1, 1, 'd']} mark="x" />, <Loops n={2} up arrow={[1, 7, 'u']} mark="x" />, <Loops box />, <Loops up box />],
      [<Loops />, <Loops up />, <Loops n={2} arrow={[1, 0, 'd']} mark="J" />, <Loops n={2} up arrow={[1, 7, 'u']} mark="J" />],
      [gap, gap, gap, <Cell />],
    ],
  },
  {
    label: 'Codici', height: 'h-[54px]',
    rows: [
      [<Loops arrow={[0, 0, 'd']} />, <Loops up arrow={[0, 8, 'u']} />, <Loops />, <Loops up sel />],
      [<Wave d={W_UP} arrow={[1, 6, 'd']} />, <Wave d={W_DOWN} arrow={[1, 6, 'u']} />, <Wave d={W_UP} />, <Wave d={W_DOWN} />, <Scissors />],
      [
        <Wave d="M1 5q2 0 2 3 0 3 2 3t2-3l3-2 3 2q0 3 2 3t2-3q0-3 2-3M10 2a2 2 0 1 1-.1 0" />,
        <Wave d="M1 11q2 0 2-4 0-4 2-4t2 4l3 2 3-2q0-4 2-4t2 4q0 4 2 4M10 9a2 2 0 1 1-.1 0" />,
        <Loops up twin />,
        <Wave d="M1 5q2 0 2 3 0 3 2 3t2-3q0-6 3-6t3 6q0 3 2 3t2-3q0-3 2-3" />,
        <Scissors />,
      ],
    ],
  },
  {
    label: 'Varie', height: 'h-[55px]',
    rows: [
      [<Txt>NULL</Txt>, <Txt>0</Txt>, <Txt>&lt;----</Txt>, <Txt>----&gt;</Txt>],
      [<Cell />, <Cell />, <Cell arrow="d" />, <Cell arrow="u" />],
      [<Cell />, <Wave d="M5.500 4v8M9.500 4v8M13.500 4v8M4 4.500h2M8 4.500h2M12 4.500h2" />, <Txt>.....</Txt>],
    ],
  },
  {
    label: 'Trasporti', height: 'h-[53px]',
    rows: [
      [<Mark />, <Mark dir="u" />, <Mark dir="u" color="#c8322c" />, <Mark color="#c8322c" />],
      [<Txt>101</Txt>, <Txt>102</Txt>, <Mark letter="a" />, <Mark dir="u" letter="a" />],
      [<Mark twoWay />, <Mark dir="u" twoWay />, <Wave d="M5 12l4-9h8M15 1l2 2-2 2" />, <Wave d="M16 12l-4-9H4M6 1L4 3l2 2" />],
    ],
  },
  {
    label: 'Moduli Standard', height: 'h-24',
    rows: [
      [<Weave v={1} />, <Weave v={1} green />, <Weave v={2} />, <Weave v={3} />],
      [<Weave v={4} />, <Weave v={4} />, <Weave v={5} />, <Weave v={6} />],
      [<Loops up arrow={[18, 7, 'u']} />, <Loops arrow={[18, 0, 'd']} />],
      [<Loops n={2} arrow={[1, 1, 'u']} mark="S" />, <Loops n={2} up arrow={[1, 7, 'd']} mark="S" />, <Loops n={2} up twin arrow={[1, 1, 'u']} mark="S" />, <Loops n={2} up twin arrow={[1, 7, 'd']} mark="S" />],
      [<Loops up arrow={[18, 7, 'd']} />, <Loops arrow={[18, 0, 'u']} />, <Loops n={2} up twin arrow={[17, 2, 'd']} />, <Loops n={2} up twin arrow={[17, 2, 'u']} />],
    ],
  },
  {
    label: '2ª Grad', height: 'h-[37px]',
    rows: [
      [<Loops />, <Loops up />, <Loops arrow={[0, 0, 'd']} />, <Loops up arrow={[0, 7, 'u']} />],
      [<Wave d={W_UP} arrow={[1, 6, 'd']} />, <Wave d={W_DOWN} arrow={[1, 6, 'u']} />, <Loops n={2} up twin />],
    ],
  },
];

const sideTabs = ['Moduli', 'Creazioni Guidate', 'Colonne Comandi Sx', 'Colonne Comandi Dx'];

const CodePanel = () => (
  <aside className="flex shrink-0 bg-[#f0f0f0] pt-px pl-[3px]">
    <div className="w-[117px] border-x border-t border-[#9a9a9a]">
      <header className="flex h-[15px] items-center border-b border-[#aaa] pr-1 pl-[3px] text-[8px] text-[#222]">
        <span className="flex-1">Codici</span>
        <button aria-label="Fixar" className="flex size-2.5 items-center justify-center rounded-xs border border-[#999]">
          <svg width="6" height="7" viewBox="0 0 6 7" fill="none" stroke="#333"><path d="M1.500.5h3v3h-3zM0 3.500h6M3 4v3" /></svg>
        </button>
        <button aria-label="Fechar painel" className="ml-px flex size-2.5 items-center justify-center rounded-xs border border-[#999]">
          <svg width="6" height="6" viewBox="0 0 6 6" stroke="#777"><path d="M1 1l4 4M5 1L1 5" /></svg>
        </button>
      </header>
      {sections.map((s) => (
        <div key={s.label} className={`${s.height} flex border-b border-[#b0b0b0]`}>
          <h3 className="w-3 shrink-0 rotate-180 border-l border-[#b0b0b0] text-center text-[8px] leading-[11px] whitespace-nowrap text-[#333] [writing-mode:vertical-rl]">{s.label}</h3>
          <div className="flex flex-1 flex-col justify-evenly pl-px">
            {s.rows.map((row, r) => (
              <div key={r} className="flex">
                {row.map((art, i) => art
                  ? <button key={i} aria-label={`${s.label} ${r + 1}.${i + 1}`} className={`${i === 4 ? 'w-4' : 'w-[21px]'} flex h-3.5 items-center justify-center`}>{art}</button>
                  : <span key={i} className="w-[21px]" />)}
                {s.label === '2ª Grad' && r === 1 && (
                  <button className="h-3.5 w-9 border-r border-b border-[#aaa] bg-[#f4f4f4] pr-1 text-right text-[8px] leading-3 shadow-xs">...</button>
                )}
              </div>
            ))}
          </div>
        </div>
      ))}
      <div className="flex h-[22px] border-b border-[#b0b0b0]">
        <div className="w-3 border-r border-[#b0b0b0]" />
        <button className="flex-1 pr-2 text-center text-[9px] text-[#333]">Livre</button>
      </div>
    </div>
    <div className="w-[18px] bg-[#f6f6f6]">
      {sideTabs.map((t) => (
        <button key={t} className="mb-0.5 block w-[13px] rounded-r-md border border-l-0 border-[#999] bg-[#fdfdfd] py-0.5 text-[8px] leading-[11px] whitespace-nowrap text-[#222] [writing-mode:vertical-rl]">{t}</button>
      ))}
    </div>
  </aside>
);

/* ---------- bottom palettes ---------- */

const ARROW_L = 'M4 7h6M6 5L4 7l2 2';
const ARROW_R = 'M4 7h6M8 5l2 2-2 2';
const HOOK = 'M4 12l4-5M8 3a2 2 0 1 1-.1 4';
const LOOPS = 'M2 8h10M5 8a2 2 0 1 1 2 0a2 2 0 1 0-2 0M9 5h3M10.500 3v4';
const ASK = 'M5.500 5q0-1.500 1.800-1.500T9 5.500L7.200 8v1M7.200 10.500v1';
const TUCK = 'M2 5h10M5 7a2 2 0 1 0 4 0a2 2 0 1 0-4 0';
const BACK = 'M2 10h10M5 8a2 2 0 1 0 4 0a2 2 0 1 0-4 0';
const HALF = 'M2 7h10M6 2l-2 2h4M9 9q2 2-1 3';
const TXT = 'M2 6v5M2 6h3M3 9h2M6 6h2v4H6zM9 6l3 4M12 6l-3 4';

const codes: [number, string, string][] = [
  [212, '#c0683a', HOOK], [213, '#8e8b3a', HOOK], [216, '#c47a38', LOOPS], [217, '#d08040', LOOPS], [218, '#b06840', LOOPS],
  [219, '#b88440', LOOPS], [220, '#b5603c', LOOPS], [221, '#b5833a', LOOPS], [97, '#b88a45', ARROW_L], [98, '#ee6a30', ARROW_R],
  [61, '#b06440', `${ARROW_R}M3 5v4M5 5v4`], [62, '#c8922f', `${ARROW_L}M11 5v4M9 5v4`], [63, '#c8924e', `${ARROW_R}M3 5v4`], [64, '#dc9440', `${ARROW_L}M11 5v4`],
  [99, '#a87070', HALF], [100, '#b5b832', HALF], [101, '#e49070', 'M3 3.500h8M3 4.500h8M3 5.500h8M3 6.500h8M6 8h2'], [102, '#a0a860', 'M3 8.500h8M3 9.500h8M3 10.500h8M3 11.500h8M6 7h2'],
  [103, '#b0a85a', 'M3 3h8v8H3z'], [104, '#e0a030', TUCK], [106, '#dc9048', TUCK], [162, '#b87850', BACK],
  [107, '#cc9068', HALF], [108, '#c4aa50', HALF], [109, '#dc6860', TXT], [110, '#d8a838', TXT],
  [111, '#c8a060', 'box+'], [112, '#b87040', 'box-'], [113, '#dca050', ASK], [114, '#d88848', ASK], [115, '#b07858', ASK],
  [116, '#ff9c5c', ASK], [117, '#d07040', ASK], [118, '#e09450', ASK], [119, '#b88040', ASK], [120, '#c48440', ASK],
  [121, '#c09040', ASK], [122, '#dc9c58', ASK], [123, '#cc8850', ASK], [124, '#c8a030', ASK], [226, '#b0705c', ARROW_L], [227, '#a8b038', ARROW_R],
];

const yarns = ['#000000', '#00dede', '#00dc00', '#ff0000', '#0000ff', '#ff8000', '#e000e0', '#dede00', '#808080'];

const Nav: React.FC<{ dir: 'left' | 'right' }> = ({ dir }) => (
  <button aria-label={dir} className="flex size-[13px] shrink-0 items-center justify-center rounded-[3px] border border-[#3a6a8a] bg-white">
    <Tri dir={dir} size={5} />
  </button>
);

const Sheets: React.FC<{ front: string; mid: string }> = ({ front, mid }) => (
  <svg width="16" height="14" viewBox="0 0 16 14" stroke="#8a9aa8">
    <path d="M7 4.500h7.500v9H7z" fill="#fff" />
    <path d="M4 2.500h7.500v9H4z" fill={mid} />
    <path d="M.5.500H8v9H.500z" fill={front} />
  </svg>
);

const CodeArt: React.FC<{ art: string }> = ({ art }) => (
  <svg width="14" height="14" viewBox="0 0 14 14" fill="none" stroke={art === ASK ? '#4a2e10' : '#1c1206'} strokeWidth={art === ASK ? 0.9 : 1.1}>
    {art.startsWith('box') ? (
      <>
        <rect x="2" y="2" width="10" height="10" fill="#111" />
        <path d={art === 'box+' ? 'M7 4v4M5 6h4M5 10h4' : 'M5 4h4M7 4v6M5 8l2 2 2-2'} stroke="#fff" />
      </>
    ) : <path d={art} />}
  </svg>
);

const BottomBar = () => (
  <div className="flex h-[42px] shrink-0 bg-[#f0f0f0] px-0.5 pt-[3px] pb-px text-[8px] leading-[9px] text-[#222]">
    <div className="flex flex-1 border border-[#c4c4c4]">
      <div className="w-8 pt-px">
        <div className="flex items-center gap-0.5">
          <Check label="Agulhas" />
          <button className="h-[13px] w-[15px] border border-[#d2d2d2] bg-[#e2e2e2] text-[9px] leading-[11px]">C</button>
        </div>
        <div className="pt-0.5 pl-0.5"><Sheets front="#ffffa0" mid="#fff" /></div>
      </div>
      <div className="flex w-[22px] flex-col items-center gap-[3px] pt-[5px] pl-0.5">
        <div className="flex h-[11px] w-5 items-center justify-center border-t border-l border-[#333] bg-[#f6f6f6]">
          <svg width="10" height="8" viewBox="0 0 10 8" fill="none" stroke="#111" strokeWidth="1.300"><circle cx="5" cy="3" r="2" /><path d="M0 6.500h10" /></svg>
        </div>
        <span>74</span>
      </div>
      <div className="flex w-3 flex-col items-end gap-1 pt-1.5">
        <button aria-label="Aumentar" className="flex size-[9px] items-center justify-center rounded-xs border border-[#333] bg-white"><Tri dir="up" size={4} /></button>
        <button aria-label="Diminuir" className="flex size-[9px] items-center justify-center rounded-xs border border-[#333] bg-white"><Tri dir="down" size={4} /></button>
      </div>
      <div className="my-1.5 mr-2 ml-2.5 w-px bg-[#c8c8c8]" />
      <div className="flex w-[728px] shrink-0 pt-[7px]">
        {codes.map(([n, bg, art]) => (
          <button key={n} className="flex min-w-0 flex-1 flex-col items-center">
            <span className="flex h-[17px] w-4 items-center justify-center border-t border-l border-[#444]" style={{ background: bg }}>
              <CodeArt art={art} />
            </span>
            <span>{n}</span>
          </button>
        ))}
      </div>
      <div className="flex items-start gap-1 pt-2 pl-0.5"><Nav dir="left" /><Nav dir="right" /></div>
    </div>
    <div className="flex w-[290px] border border-[#c4c4c4]">
      <div className="w-6 pt-px pl-0.5">
        <Check label="Fios" />
        <div className="pt-1 pl-0.5"><Sheets front="#fff" mid="#f0f090" /></div>
      </div>
      <div className="flex w-4 flex-col items-center gap-1 pt-[5px]">
        <span className="h-[11px] w-[17px] border border-[#b06a28] bg-[#ff8210]" />
        <span>5L</span>
      </div>
      <div className="flex w-[43px] flex-col items-center gap-[3px] pt-1">
        <button className="flex items-center gap-0.5 pl-2">- <Tri dir="down" /></button>
        <button className="h-[13px] w-10 border border-[#ccc] bg-[#e2e2e2] text-[8px] leading-[11px]">Intarsio...</button>
      </div>
      <div className="flex w-[156px] pl-px">
        {yarns.map((c, i) => (
          <button key={c} className={`flex min-w-0 flex-1 flex-col items-center border pt-1.5 pb-px ${i === 0 ? 'border-[#aaa]' : 'border-transparent'}`}>
            <span className="h-[17px] w-4 border-t border-l border-[#444]" style={{ background: c }} />
            <span>{i}</span>
          </button>
        ))}
      </div>
      <div className="flex items-start gap-1 pt-2 pl-1"><Nav dir="left" /><Nav dir="right" /></div>
    </div>
    <div className="w-[118px] border border-[#c4c4c4] pt-px pl-3.5">
      <button aria-label="Abrir lista" className="flex size-[9px] items-center justify-center rounded-xs border border-[#3a6a8a] bg-white"><Tri dir="down" size={4} /></button>
    </div>
  </div>
);

const StatusBar = () => (
  <div className="flex h-4 shrink-0 justify-end bg-[#f2f2f2] text-[8px] leading-4 text-[#222] *:border-l *:border-[#d8d8d8]">
    <div className="w-[100px] pl-1">X : 258 &nbsp; Y : 1</div>
    <div className="w-[100px] pl-0.5">Area: X : 7 &nbsp; Y : 3</div>
    <div className="flex w-[43px] items-center gap-[3px] pl-0.5"><i className="size-2.5 border border-[#333] bg-white" />0</div>
    <div className="flex w-[50px] items-center gap-[3px] pl-0.5"><i className="size-2.5 bg-black" />- (0)</div>
    <div className="w-[111px]" />
  </div>
);

/* ---------- Windows taskbar ---------- */

const apps: { name: string; open?: boolean; active?: boolean; art: React.ReactNode }[] = [
  { name: 'Cortana', art: <circle cx="9" cy="9" r="4.500" stroke="#fff" strokeWidth="1.500" /> },
  { name: 'Visão de tarefas', art: <path d="M4 5V3.500h7V5M4 13v1.500h7V13M4 7h7v4H4zM14 3v2M14 7v8" stroke="#e8e8e8" /> },
  { name: 'Edge', art: <><circle cx="9" cy="9" r="8" fill="#1a7fd0" /><path d="M1 8a8 8 0 0 1 16 0q0 4-4 4-4 0-2-3-1-4-5-3-4 1-5 2z" fill="#3ccb9a" /><path d="M7 8q-2 5 2 8-8-1-6-7 2-3 6-3 3 0 3 3-2-2-5-1z" fill="#1456a8" /></> },
  { name: 'Explorador', open: true, art: <><path d="M2 3h6l1.500 2H16v10H2z" fill="#f3c34f" /><path d="M2 7h14v8H2z" fill="#fbe08a" /><path d="M5 15v-4h8v4h-2v-2H7v2z" fill="#3d95dc" /></> },
  { name: 'Chrome', open: true, art: <><circle cx="9" cy="9" r="7.500" fill="#e0453a" /><path d="M9 16.500L12.500 9l-1-3h4.500a7.500 7.500 0 0 1-7 10.500z" fill="#f9c83a" /><path d="M2.500 5.200A7.500 7.500 0 0 0 9 16.500l2-4-5-3z" fill="#3aa757" /><circle cx="9" cy="9" r="3.600" fill="#fff" /><circle cx="9" cy="9" r="2.800" fill="#4285f4" /></> },
  { name: 'Computador', art: <><path d="M2 2l9-1 2 9-9 1z" fill="#2038c8" stroke="#d8e0f0" /><path d="M3 12l9-1 2 4-9 1z" fill="#c8d0dc" /><circle cx="13.500" cy="13" r="3.500" fill="#eee" stroke="#999" /><path d="M12 13l1 1 2-2" stroke="#4a4" /></> },
  { name: 'Terminal', open: true, art: <><rect x="1.500" y="3" width="15" height="12" fill="#111" stroke="#aaa" /><path d="M2 4.500h14" stroke="#ccc" strokeWidth="2" /><path d="M4 8l2 1-2 1M8 8h3" stroke="#eee" /></> },
  { name: 'Calculadora', open: true, art: <><path d="M3 1.500h12v15H3z" fill="#6d8494" /><path d="M4 2.500h10v4H4z" fill="#7fd0f0" /><path d="M4 8h2.500v2H4zM7.500 8H10v2H7.500zM11 8h3v2h-3zM4 11h2.500v2H4zM7.500 11H10v2H7.500zM4 14h2.500v2H4zM7.500 14H10v2H7.500z" fill="#e8eef2" /><path d="M11 11h3v5h-3z" fill="#2878b8" /></> },
  { name: 'Email', open: true, art: <><path d="M1 7l8-6 8 6v9H1z" fill="#1668b8" /><path d="M3 6h12v5H3z" fill="#fff" /><path d="M1 7l8 5 8-5v9H1z" fill="#38aaf0" /></> },
  { name: 'Gravador', open: true, art: <><rect x="2" y="2" width="14" height="14" rx="1.500" fill="#16181c" /><path d="M5 13v-2" stroke="#e03a3a" strokeWidth="2" /><path d="M8 13v-4" stroke="#4a7ae0" strokeWidth="2" /><path d="M11 13v-3" stroke="#e0a030" strokeWidth="2" /><path d="M14 13V7" stroke="#e05a3a" strokeWidth="2" /></> },
  { name: 'LKS', active: true, open: true, art: <path d="M9 2l1.200 5.800L16 9l-5.800 1.200L9 16l-1.200-5.800L2 9l5.800-1.200z" fill="#e23434" stroke="#f8b0b0" strokeWidth=".5" /> },
  { name: 'Captura', open: true, art: <><rect x="1.500" y="1.500" width="15" height="15" rx="3" fill="#4bd07c" /><circle cx="8" cy="10.500" r="4.500" fill="#f4fff8" /><path d="M8 8.500v2h2M11 4h3v3M7 4h2" stroke="#1c6a3c" strokeWidth="1.200" /></> },
];

const Taskbar = () => (
  <footer className="flex h-[27px] shrink-0 bg-[#223746] text-white">
    <button aria-label="Iniciar" className="flex w-8 items-center justify-center">
      <svg width="11" height="11" viewBox="0 0 11 11" fill="#fff"><path d="M0 1.500l5-.7v4.500H0zM5.700.7L11 0v5.300H5.700zM0 5.900h5v4.500l-5-.7zM5.700 5.900H11V11l-5.300-.7z" /></svg>
    </button>
    <label className="flex w-[229px] items-center gap-2 bg-[#f2f2f2] pl-2 text-[#333]">
      <svg width="11" height="12" viewBox="0 0 11 12" fill="none" stroke="#222" strokeWidth="1.200"><circle cx="7" cy="4" r="3.400" /><path d="M4.500 6.500L.5 11" /></svg>
      <input type="text" placeholder="Digite aqui para pesquisar" aria-label="Pesquisar" className="min-w-0 flex-1 text-[10px] outline-none placeholder:text-[#444]" />
    </label>
    {apps.map((a) => (
      <button key={a.name} aria-label={a.name} className={`flex w-[33px] items-center justify-center ${a.active ? 'bg-[#4d5e6a]' : ''}`}>
        <span className={`flex h-full w-[27px] items-center justify-center border-b ${a.open ? 'border-[#6fb0ee]' : 'border-transparent'}`}>
          <svg width="17" height="17" viewBox="0 0 18 18" fill="none">{a.art}</svg>
        </span>
      </button>
    ))}
    <div className="flex-1" />
    <svg width="92" height="27" viewBox="0 0 92 27" fill="none" stroke="#dfe6ea" className="shrink-0">
      <path d="M2 16l4-4 4 4" />
      <circle cx="22" cy="14" r="2.500" /><path d="M20 9.500h4M20 18.500h4M18.500 11v6M25.500 11v6" />
      <path d="M33 16q0-3 3-3 2-3 4 0 3 1 2 3z" fill="#dfe6ea" /><circle cx="41" cy="16" r="2.500" fill="#aab" />
      <path d="M52 9h3v6h-3z" fill="#fff" /><path d="M50 13q0 4 3.500 4t3.500-4M53.500 17v2" />
      <path d="M65 10h8v6h-8zM67 18h6M62 9v4" />
      <path d="M79 12h2l3-3v9l-3-3h-2zM86 11q1.500 2.500 0 5M88 10q2.500 4 0 7" />
    </svg>
    <div className="flex w-6 flex-col justify-center text-center text-[8px] leading-[11px]"><span>POR</span><span>PTB2</span></div>
    <div className="flex w-[46px] flex-col justify-center text-center text-[8px] leading-[11px]"><span>13:27</span><span>20/01/2021</span></div>
    <button aria-label="Notificações" className="flex w-[30px] items-center justify-center">
      <svg width="12" height="12" viewBox="0 0 12 12"><path d="M0 1h11v8H6l-2 2.500V9H0z" fill="#fff" /><path d="M2 3.500h7M2 6h4" stroke="#223746" /><circle cx="9" cy="8" r="2.500" fill="#b8c0c6" /></svg>
    </button>
    <div className="ml-0.5 w-1 border-l border-[#5a6a76]" />
  </footer>
);

const menus = ['Arquivo', 'Editar', 'Ferramentas', 'processo Knit', 'HP2-52C', 'Vista niveis', 'Window', 'ajuda'];

const App: React.FC = () => (
  <div className="flex h-screen flex-col overflow-hidden bg-[#f0f0f0] font-[Roboto,sans-serif]">
    <div className="flex h-[15px] shrink-0 items-center bg-white pl-[2px]">
      <Star />
      <h1 className="flex-1 pl-[3px] text-[8px] text-[#333]">LKS</h1>
      <button aria-label="Minimizar janela" className="flex w-[30px] justify-center"><svg width="8" height="8" stroke="#222"><path d="M1 4.500h6" /></svg></button>
      <button aria-label="Restaurar janela" className="flex w-[30px] justify-center"><svg width="8" height="8" fill="none" stroke="#222"><path d="M.5 2.500h5v5h-5zM2.500 2.500v-2h5v5h-2" /></svg></button>
      <button aria-label="Fechar janela" className="flex w-8 justify-center"><svg width="8" height="8" stroke="#222"><path d="M1 1l6 6M7 1L1 7" /></svg></button>
    </div>
    <nav className="flex h-[13px] shrink-0 items-center gap-[9px] bg-white pl-[5px] text-[8px] text-[#222]">
      {menus.map((m) => <button key={m}>{m}</button>)}
    </nav>
    <Toolbar />
    <main className="flex min-h-0 flex-1">
      <Toolbox />
      <div className="flex min-w-0 flex-1 flex-col gap-[3px] pt-px pb-[3px]">
        <MdiWindow title="SemNome1[ Modificar ]">
          <div className="flex min-h-0 flex-1">
            <div className="min-w-0 flex-1 overflow-hidden bg-[#030303]"><EditCanvas /></div>
            <VScroll before="flex-[195]" thumb="flex-[13]" after="flex-[19]" />
          </div>
          <HScroll before="flex-[686]" thumb="flex-[168]" after="flex-[130]" />
        </MdiWindow>
        <MdiWindow title="SemNome1 (Expande)">
          <ExpandBar />
          <div className="flex min-h-0 flex-1">
            <div className="min-w-0 flex-1 overflow-hidden bg-[#acacac]"><ExpandCanvas /></div>
            <VScroll before="flex-[182]" thumb="flex-[25]" after="flex-[0]" />
          </div>
          <HScroll before="flex-[559]" thumb="flex-[283]" after="flex-[142]" />
        </MdiWindow>
      </div>
      <CodePanel />
    </main>
    <BottomBar />
    <StatusBar />
    <Taskbar />
  </div>
);

export default App;
